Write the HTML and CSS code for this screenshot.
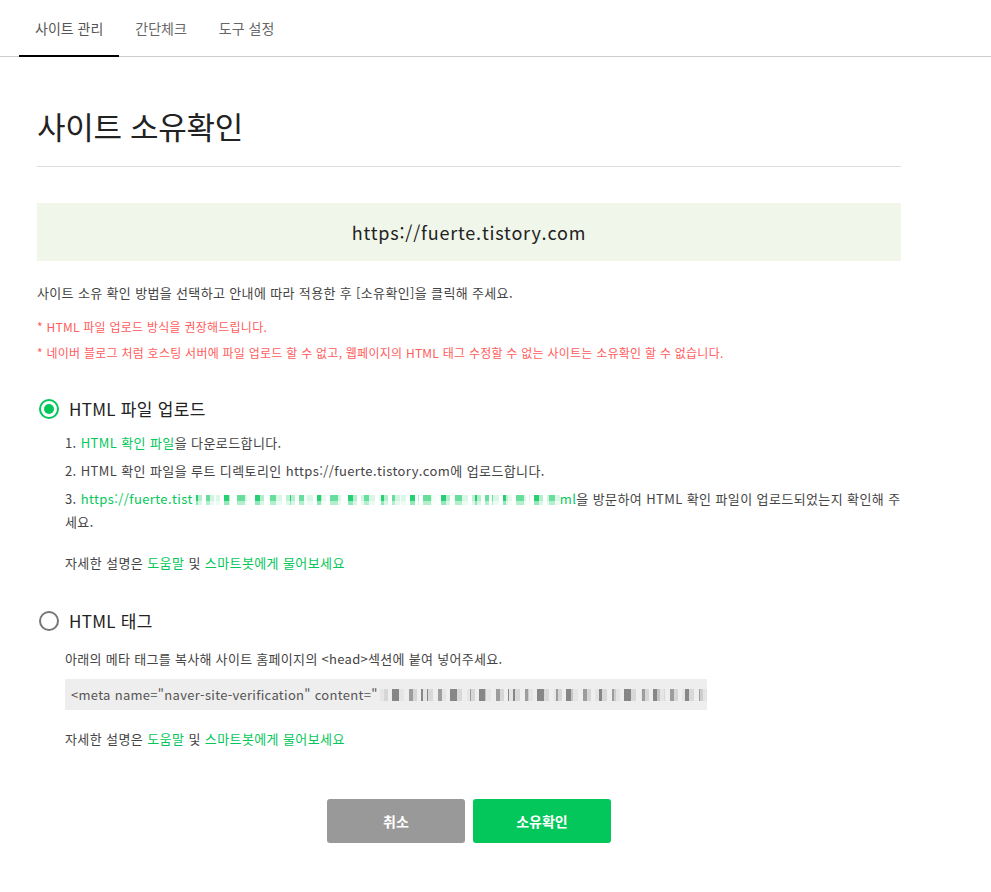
FILE: index.html
```html
<!DOCTYPE html>
<html lang="ko">
<head>
  <meta charset="UTF-8">
  <meta name="viewport" content="width=device-width, initial-scale=1.0">
  <title>사이트 소유확인</title>
  <link rel="stylesheet" href="styles.css">
</head>
<body>
  <nav class="tabs">
    <a class="tab active">사이트 관리</a>
    <a class="tab">간단체크</a>
    <a class="tab">도구 설정</a>
  </nav>

  <div class="container">
    <h1>사이트 소유확인</h1>

    <div class="site-box">https://fuerte.tistory.com</div>

    <p class="desc">사이트 소유 확인 방법을 선택하고 안내에 따라 적용한 후 [소유확인]을 클릭해 주세요.</p>
    <p class="notice">* HTML 파일 업로드 방식을 권장해드립니다.</p>
    <p class="notice">* 네이버 블로그 처럼 호스팅 서버에 파일 업로드 할 수 없고, 웹페이지의 HTML 태그 수정할 수 없는 사이트는 소유확인 할 수 없습니다.</p>

    <div class="method">
      <label class="radio checked"><span class="dot"></span>HTML 파일 업로드</label>
      <ol class="steps">
        <li>1. <a class="link">HTML 확인 파일</a>을 다운로드합니다.</li>
        <li>2. HTML 확인 파일을 루트 디렉토리인 https://fuerte.tistory.com에 업로드합니다.</li>
        <li>3. <a class="link">https://fuerte.tist<span class="mosaic url"></span>ml</a><span>을 방문하여 HTML 확인 파일이 업로드되었는지 확인해 주</span><span>세요.</span></li>
      </ol>
      <p class="help">자세한 설명은 <a class="link">도움말</a> 및 <a class="link">스마트봇에게 물어보세요</a></p>
    </div>

    <div class="method">
      <label class="radio"><span class="dot"></span>HTML 태그</label>
      <p class="sub">아래의 메타 태그를 복사해 사이트 홈페이지의 &lt;head&gt;섹션에 붙여 넣어주세요.</p>
      <div class="code">&lt;meta name="naver-site-verification" content="<span class="mosaic token"></span></div>
      <p class="help">자세한 설명은 <a class="link">도움말</a> 및 <a class="link">스마트봇에게 물어보세요</a></p>
    </div>

    <div class="buttons">
      <button class="btn cancel">취소</button>
      <button class="btn confirm">소유확인</button>
    </div>
  </div>
</body>
</html>
```

FILE: styles.css
```css
body {
  font-family: "Noto Sans CJK KR", "Noto Sans", sans-serif;
  margin: 0;
  background-color: #fff;
  color: #444;
}
.tabs {
  display: flex;
  padding-left: 19px;
  border-bottom: 1px solid #ccc;
  height: 56px;
}
.tab {
  display: flex;
  align-items: center;
  padding: 0 16px;
  font-size: 14px;
  color: #666;
  margin-bottom: -1px;
  border-bottom: 2px solid transparent;
  height: 55px;
}
.tab.active {
  border-bottom-color: #000;
  color: #555;
}
.container {
  width: 864px;
  margin-left: 37px;
}
h1 {
  font-size: 31px;
  font-weight: normal;
  color: #222;
  margin: 44px 0 0;
  padding-bottom: 16px;
  border-bottom: 1px solid #ddd;
  letter-spacing: -0.3px;
  line-height: 49px;
}
.site-box {
  margin-top: 36px;
  height: 58px;
  background-color: #f0f6e9;
  display: flex;
  align-items: center;
  justify-content: center;
  font-size: 18px;
  color: #222;
  letter-spacing: 0.8px;
}
.desc {
  margin: 22px 0 14px;
  font-size: 13px;
  line-height: 20px;
  letter-spacing: 0.35px;
}
.notice {
  margin: 0 0 6px;
  font-size: 12px;
  line-height: 20px;
  color: #ff5c5c;
  letter-spacing: 0.25px;
}
.method {
  margin-top: 34px;
}
.method + .method {
  margin-top: 37px;
}
.radio {
  display: flex;
  align-items: center;
  font-size: 17px;
  color: #222;
  line-height: 24px;
  letter-spacing: 0.3px;
}
.dot {
  width: 16px;
  height: 16px;
  border: 2px solid #777;
  border-radius: 50%;
  margin: 0 10px 0 2px;
  position: relative;
}
.radio.checked .dot {
  border-color: #03c75a;
}
.radio.checked .dot::after {
  content: "";
  position: absolute;
  left: 3px;
  top: 3px;
  width: 10px;
  height: 10px;
  border-radius: 50%;
  background-color: #03c75a;
}
.steps {
  list-style: none;
  margin: 10px 0 0;
  padding: 0 0 0 28px;
  font-size: 13px;
  line-height: 23px;
  letter-spacing: 0.4px;
}
.steps li {
  margin-bottom: 5px;
}
.link {
  color: #03c75a;
}
/* pixelated placeholder for the hidden verification key */
.mosaic {
  display: inline-block;
  height: 10px;
  vertical-align: -1px;
}
.mosaic.url {
  width: 367px;
  background:
    repeating-linear-gradient(90deg, rgba(255,255,255,0.9) 0 3px, transparent 3px 17px, rgba(255,255,255,0.7) 17px 23px, transparent 23px 37px),
    repeating-linear-gradient(90deg, rgba(3,199,90,0.85) 0 5px, rgba(3,199,90,0.3) 5px 9px, transparent 9px 13px, rgba(3,199,90,0.6) 13px 21px, rgba(3,199,90,0.15) 21px 27px, transparent 27px 31px);
  -webkit-mask-image: linear-gradient(180deg, #000 0 60%, rgba(0,0,0,0.5) 60%);
}
.mosaic.token {
  width: 335px;
  height: 12px;
  margin-left: 2px;
  background:
    repeating-linear-gradient(90deg, rgba(238,238,238,0.9) 0 4px, transparent 4px 19px, rgba(238,238,238,0.6) 19px 26px, transparent 26px 43px),
    repeating-linear-gradient(90deg, rgba(90,90,90,0.55) 0 4px, rgba(120,120,120,0.2) 4px 8px, transparent 8px 12px, rgba(90,90,90,0.7) 12px 19px, rgba(150,150,150,0.25) 19px 24px, transparent 24px 29px);
}
.help {
  margin: 20px 0 0 28px;
  font-size: 13px;
  letter-spacing: 0.4px;
}
.sub {
  margin: 16px 0 0 28px;
  font-size: 13px;
  letter-spacing: 0.3px;
}
.code {
  margin: 11px 0 0 28px;
  width: 642px;
  height: 31px;
  padding-left: 6px;
  box-sizing: border-box;
  background-color: #eee;
  display: flex;
  align-items: center;
  font-size: 13px;
  color: #555;
  letter-spacing: 0.3px;
  white-space: nowrap;
  overflow: hidden;
}
.code + .help {
  margin-top: 19px;
}
.buttons {
  display: flex;
  justify-content: center;
  gap: 8px;
  margin-top: 51px;
}
.btn {
  width: 138px;
  height: 44px;
  border: none;
  border-radius: 3px;
  color: #fff;
  font-family: inherit;
  font-size: 14px;
  font-weight: bold;
  cursor: pointer;
}
.cancel {
  background-color: #999;
}
.confirm {
  background-color: #03c75a;
}
```
